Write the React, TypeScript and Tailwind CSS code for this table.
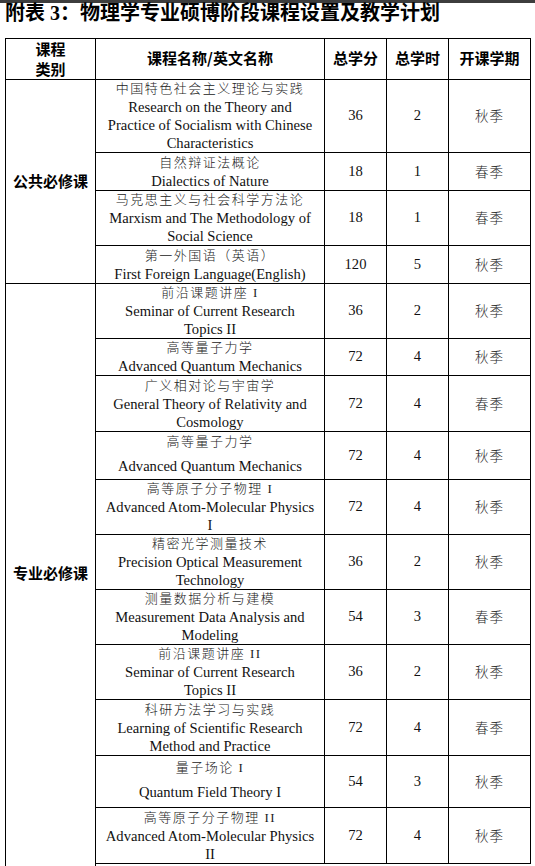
import React from "react";

type Course = {
  cn: string;
  en: string[];
  credit: string;
  hours: string;
  term: string;
  h: number;
  gap?: boolean;
};

const PUBLIC: Course[] = [
  { cn: "中国特色社会主义理论与实践", en: ["Research on the Theory and", "Practice of Socialism with Chinese", "Characteristics"], credit: "36", hours: "2", term: "秋季", h: 72 },
  { cn: "自然辩证法概论", en: ["Dialectics of Nature"], credit: "18", hours: "1", term: "春季", h: 38 },
  { cn: "马克思主义与社会科学方法论", en: ["Marxism and The Methodology of", "Social Science"], credit: "18", hours: "1", term: "春季", h: 55 },
  { cn: "第一外国语（英语）", en: ["First Foreign Language(English)"], credit: "120", hours: "5", term: "秋季", h: 38 },
];

const CORE: Course[] = [
  { cn: "前沿课题讲座 I", en: ["Seminar of Current Research", "Topics II"], credit: "36", hours: "2", term: "秋季", h: 55 },
  { cn: "高等量子力学", en: ["Advanced Quantum Mechanics"], credit: "72", hours: "4", term: "秋季", h: 37 },
  { cn: "广义相对论与宇宙学", en: ["General Theory of Relativity and", "Cosmology"], credit: "72", hours: "4", term: "春季", h: 56 },
  { cn: "高等量子力学", en: ["Advanced Quantum Mechanics"], credit: "72", hours: "4", term: "秋季", h: 48, gap: true },
  { cn: "高等原子分子物理 I", en: ["Advanced Atom-Molecular Physics", "I"], credit: "72", hours: "4", term: "秋季", h: 55 },
  { cn: "精密光学测量技术", en: ["Precision Optical Measurement", "Technology"], credit: "36", hours: "2", term: "秋季", h: 55 },
  { cn: "测量数据分析与建模", en: ["Measurement Data Analysis and", "Modeling"], credit: "54", hours: "3", term: "春季", h: 55 },
  { cn: "前沿课题讲座 II", en: ["Seminar of Current Research", "Topics II"], credit: "36", hours: "2", term: "秋季", h: 55 },
  { cn: "科研方法学习与实践", en: ["Learning of Scientific Research", "Method and Practice"], credit: "72", hours: "4", term: "春季", h: 56 },
  { cn: "量子场论 I", en: ["Quantum Field Theory I"], credit: "54", hours: "3", term: "秋季", h: 52, gap: true },
  { cn: "高等原子分子物理 II", en: ["Advanced Atom-Molecular Physics", "II"], credit: "72", hours: "4", term: "秋季", h: 56 },
];

const cell = "border border-black p-0 text-center align-middle";
const cnText = "text-[13px] tracking-[1.5px] font-light text-[#222] leading-[18px] whitespace-nowrap";
const enText = "text-[14.6px] text-[#111] leading-[18px] whitespace-nowrap";
const num = "text-[14.6px] text-[#111]";
const head = "text-[15px] font-bold text-black font-['Noto_Sans_CJK_SC',sans-serif]";

function CourseCells({ c }: { c: Course }) {
  return (
    <>
      <td className={`${cell} ${c.gap ? "pb-[4px]" : ""}`}>
        <div className={cnText}>{c.cn}</div>
        {c.gap && <div className="h-[6px]" />}
        {c.en.map((line, i) => (
          <div key={i} className={enText}>{line}</div>
        ))}
      </td>
      <td className={`${cell} ${num}`}>{c.credit}</td>
      <td className={`${cell} ${num}`}>{c.hours}</td>
      <td className={cell}>
        <span className="text-[13.5px] tracking-[1px] font-light text-[#222]">{c.term}</span>
      </td>
    </>
  );
}

function CategoryCell({ label, span, open }: { label: string; span: number; open?: boolean }) {
  return (
    <td rowSpan={span} className={`${cell} ${open ? "border-b-0" : ""}`}>
      <span className={head}>{label}</span>
    </td>
  );
}

export default function App() {
  return (
    <div className="w-[535px] h-[866px] overflow-hidden bg-white font-['Liberation_Serif','Noto_Sans_CJK_SC',serif]">
      <div className="h-[3px] bg-[#3d3d3d]" />
      <div className="pl-[5px] text-[20px] leading-[21px] font-bold text-black whitespace-nowrap">
        附表 3：物理学专业硕博阶段课程设置及教学计划
      </div>

      <table className="mt-[14px] ml-[5px] w-[525px] table-fixed border-collapse">
        <colgroup>
          <col className="w-[90px]" />
          <col className="w-[229px]" />
          <col className="w-[62px]" />
          <col className="w-[62px]" />
          <col className="w-[82px]" />
        </colgroup>
        <tbody>
          <tr className="h-[40px]">
            <td className={cell}>
              <div className={`${head} leading-[20px]`}>
                课程
                <br />
                类别
              </div>
            </td>
            <td className={cell}><span className={head}>课程名称/英文名称</span></td>
            <td className={cell}><span className={head}>总学分</span></td>
            <td className={cell}><span className={head}>总学时</span></td>
            <td className={cell}><span className={head}>开课学期</span></td>
          </tr>

          {PUBLIC.map((c, i) => (
            <tr key={"p" + i} style={{ height: c.h }}>
              {i === 0 && <CategoryCell label="公共必修课" span={PUBLIC.length} />}
              <CourseCells c={c} />
            </tr>
          ))}

          {CORE.map((c, i) => (
            <tr key={"c" + i} style={{ height: c.h }}>
              {i === 0 && <CategoryCell label="专业必修课" span={CORE.length} open />}
              <CourseCells c={c} />
            </tr>
          ))}

          <tr className="h-[10px]">
            <td className="border-l border-r border-black p-0" />
            <td colSpan={4} className="p-0" />
          </tr>
        </tbody>
      </table>
    </div>
  );
}
